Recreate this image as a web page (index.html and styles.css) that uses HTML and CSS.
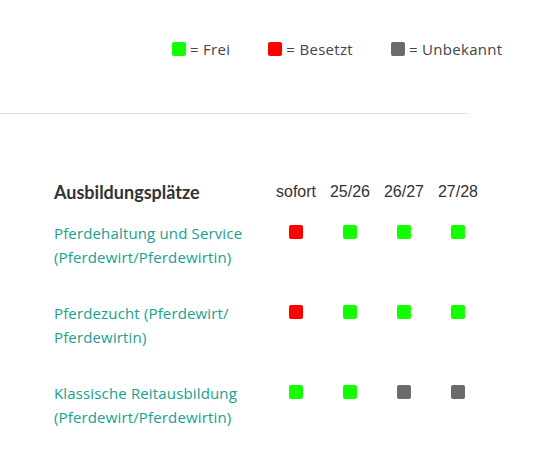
FILE: index.html
```html
<!DOCTYPE html>
<html lang="de">
<head>
<meta charset="utf-8">
<title>Ausbildungsplätze</title>
<link rel="stylesheet" href="styles.css">
</head>
<body>
<header class="top">
  <ul class="legend">
    <li class="legend-item"><span class="sq sq-free"></span>= Frei</li>
    <li class="legend-item"><span class="sq sq-busy"></span>= Besetzt</li>
    <li class="legend-item"><span class="sq sq-unknown"></span>= Unbekannt</li>
  </ul>
</header>
<hr class="divider">
<section class="table">
  <h2 class="title">Ausbildungsplätze</h2>
  <div class="col-head">sofort</div>
  <div class="col-head">25/26</div>
  <div class="col-head">26/27</div>
  <div class="col-head">27/28</div>

  <a class="job" href="#">Pferdehaltung und Service<br>(Pferdewirt/Pferdewirtin)</a>
  <div class="cell"><span class="sq sq-busy"></span></div>
  <div class="cell"><span class="sq sq-free"></span></div>
  <div class="cell"><span class="sq sq-free"></span></div>
  <div class="cell"><span class="sq sq-free"></span></div>

  <a class="job" href="#">Pferdezucht (Pferdewirt/<br>Pferdewirtin)</a>
  <div class="cell"><span class="sq sq-busy"></span></div>
  <div class="cell"><span class="sq sq-free"></span></div>
  <div class="cell"><span class="sq sq-free"></span></div>
  <div class="cell"><span class="sq sq-free"></span></div>

  <a class="job" href="#">Klassische Reitausbildung<br>(Pferdewirt/Pferdewirtin)</a>
  <div class="cell"><span class="sq sq-free"></span></div>
  <div class="cell"><span class="sq sq-free"></span></div>
  <div class="cell"><span class="sq sq-unknown"></span></div>
  <div class="cell"><span class="sq sq-unknown"></span></div>
</section>
</body>
</html>
```
FILE: styles.css
```css
html, body {
  margin: 0;
  padding: 0;
  background: #fff;
}
body {
  width: 542px;
  height: 452px;
  overflow: hidden;
  font-family: "Open Sans", "Liberation Sans", sans-serif;
}
.top {
  height: 113px;
  box-sizing: border-box;
  padding-top: 40px;
}
.legend {
  list-style: none;
  margin: 0;
  padding: 0 0 0 172px;
  display: flex;
  gap: 38px;
}
.legend-item {
  display: flex;
  align-items: center;
  gap: 4px;
  font-size: 15px;
  line-height: 18px;
  letter-spacing: 0.3px;
  color: #444;
}
.sq {
  display: inline-block;
  width: 14px;
  height: 14px;
  border-radius: 2px;
}
.sq-free { background: #13ff00; }
.sq-busy { background: #ff0000; }
.sq-unknown { background: #6b6b6b; }
.divider {
  margin: 0;
  border: 0;
  height: 1px;
  width: 468px;
  background: #e2e2e2;
}
.table {
  display: grid;
  grid-template-columns: 215px repeat(4, 54px);
  padding: 66px 0 0 54px;
  row-gap: 32px;
  align-items: start;
}
.title {
  margin: 0;
  font-family: "Lato", sans-serif;
  font-size: 18px;
  line-height: 24px;
  font-weight: 700;
  color: #333;
  align-self: end;
  margin-bottom: -15px;
}
.col-head {
  font-family: "Liberation Sans", sans-serif;
  font-size: 16px;
  line-height: 24px;
  color: #333;
  text-align: center;
  align-self: end;
  margin-bottom: -15px;
}
.job {
  font-size: 15px;
  line-height: 24px;
  letter-spacing: 0.15px;
  color: #17a093;
  text-decoration: none;
}
.cell {
  display: flex;
  justify-content: center;
  padding-top: 4px;
}
```
